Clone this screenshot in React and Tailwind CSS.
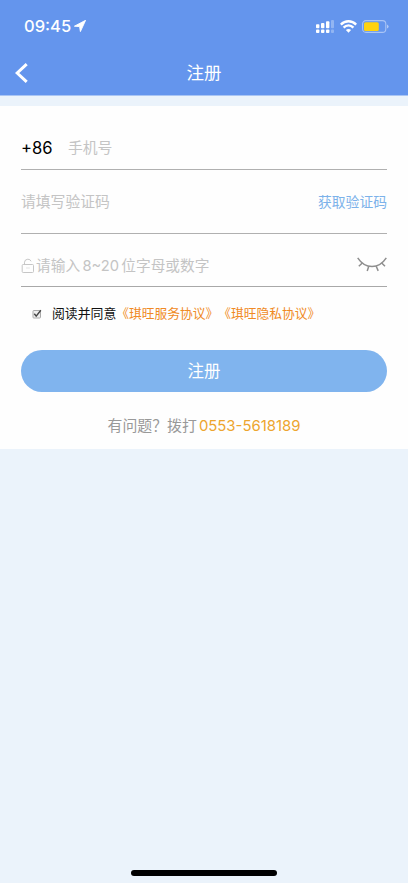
import React, { useState } from 'react';

function StatusBar() {
    return (
        <div className="h-[50px] flex items-start justify-between pl-6 pr-[19px] pt-[17px]">
            <div className="flex items-center h-[19px]">
                <span className="w-[47px] whitespace-nowrap text-[16.5px] leading-[19px] font-medium">09:45</span>
                <svg className="ml-[3px] mb-px" width="12" height="12" viewBox="0 0 12 12" fill="white">
                    <path d="M11.6 0.3 L0.4 6.2 L5.6 6.6 L6.4 11.6 Z" stroke="white" strokeWidth="0.9" strokeLinejoin="round" />
                </svg>
            </div>
            <div className="flex items-center h-[19px]">
                <svg width="18" height="13" viewBox="0 0 18 13" fill="white">
                    <rect x="0" y="4.2" width="3.4" height="4" rx="0.9" />
                    <rect x="5" y="3" width="3.4" height="5.2" rx="0.9" />
                    <rect x="10" y="1.3" width="3.4" height="6.9" rx="0.9" />
                    <rect x="15" y="0" width="3" height="8.2" rx="0.9" opacity="0.3" />
                    <rect x="0" y="9.6" width="3.4" height="3.3" rx="0.9" />
                    <rect x="5" y="9.6" width="3.4" height="3.3" rx="0.9" />
                    <rect x="10" y="9.6" width="3.4" height="3.3" rx="0.9" />
                    <rect x="15" y="9.6" width="3" height="3.3" rx="0.9" opacity="0.3" />
                </svg>
                <svg className="ml-1.5 mb-px" width="17" height="13" viewBox="0 0 17 13" fill="none" stroke="white" strokeWidth="2.4">
                    <path d="M0.8 4.6 Q4.1 1.3 8.5 1.3 T16.2 4.6" />
                    <path d="M3.6 7.6 Q5.7 5.4 8.5 5.4 T13.4 7.6" />
                    <path d="M8.5 12.8 L5.9 10.1 Q8.5 7.9 11.1 10.1 Z" fill="white" stroke="none" />
                </svg>
                <svg className="ml-[5px]" width="27" height="13" viewBox="0 0 27 13">
                    <rect x="0.6" y="0.6" width="23.2" height="11.8" rx="3.4" fill="none" stroke="white" strokeOpacity="0.45" strokeWidth="1.1" />
                    <rect x="2" y="2.2" width="14.8" height="8.8" rx="1.6" fill="#ffd20f" />
                    <path d="M25 4.4 Q26.6 5.2 26.6 6.5 T25 8.6 Z" fill="white" fillOpacity="0.5" />
                </svg>
            </div>
        </div>
    );
}

function LockIcon() {
    return (
        <svg width="14" height="16" viewBox="0 0 14 16" fill="none" stroke="#c6c6c6" strokeWidth="1">
            <rect x="1.2" y="6.5" width="11.3" height="8" rx="1" />
            <path d="M3.5 6.5 V4.2 Q3.7 1.4 6.8 1.2 Q9.3 1.2 10.1 3.3" />
            <path d="M5 10 H8.8" stroke="#e4e4e4" />
        </svg>
    );
}

function ClosedEyeIcon() {
    return (
        <svg width="30" height="15" viewBox="0 0 30 15" fill="none" stroke="#8e8e8e" strokeWidth="1.5">
            <path d="M0.7 0.8 Q6.3 9.4 15 9.4 T29.3 0.8" />
            <path d="M5.3 6 L1.8 9.2 M11.8 9.2 L10.2 13.9 M19.2 9.2 L21.2 13.9 M24.7 6 L28 9.2" />
        </svg>
    );
}

function App() {
    const [phone, setPhone] = useState('');
    const [code, setCode] = useState('');
    const [password, setPassword] = useState('');
    const [agreed, setAgreed] = useState(true);

    return (
        <div className="min-h-screen flex flex-col bg-[#ebf3fb] font-['Inter','Noto_Sans_CJK_SC',sans-serif]">
            {/* Header */}
            <header className="h-24 bg-[#6495ed] border-b border-[#a9c5f4] text-white">
                <StatusBar />
                <div className="h-[45px] grid grid-cols-[1fr_auto_1fr] items-center px-[15px]">
                    <svg width="13" height="20" viewBox="0 0 13 20" fill="none" stroke="white" strokeWidth="3">
                        <path d="M11.7 1.2 L2.2 10 L11.7 18.8" />
                    </svg>
                    <h1 className="text-[17.5px] leading-6 font-normal">注册</h1>
                </div>
            </header>

            {/* Form */}
            <main className="mt-2.5 h-[343px] px-[21px] bg-[#fefefe]">
                <div className="h-16 pt-[21px] flex items-center border-b border-[#b0b0b0]">
                    <span className="w-[47px] text-[16.6px] leading-6 text-black">+86</span>
                    <input
                        className="flex-1 min-w-0 h-6 text-[14.8px] outline-none placeholder:text-[#c4c4c4]"
                        placeholder="手机号"
                        value={phone}
                        onChange={(e) => setPhone(e.target.value)}
                    />
                </div>
                <div className="h-16 flex items-center border-b border-[#b0b0b0]">
                    <input
                        className="flex-1 min-w-0 h-6 text-[14.8px] outline-none placeholder:text-[#c4c4c4]"
                        placeholder="请填写验证码"
                        value={code}
                        onChange={(e) => setCode(e.target.value)}
                    />
                    <button className="text-[13.8px] leading-6 pt-px text-[#7cb2ea]">获取验证码</button>
                </div>
                <div className="h-[53px] pt-[11px] flex items-center border-b border-[#a8a8a8]">
                    <LockIcon />
                    <input
                        type="text"
                        className="flex-1 min-w-0 h-6 ml-px text-[14.7px] [word-spacing:-1.8px] outline-none placeholder:text-[#c4c4c4]"
                        placeholder="请输入 8~20 位字母或数字"
                        value={password}
                        onChange={(e) => setPassword(e.target.value)}
                    />
                    <div className="pb-0.5">
                        <ClosedEyeIcon />
                    </div>
                </div>

                <div className="h-[63px] pb-[9px] flex items-center pl-[11px] text-[12.85px]">
                    <button onClick={() => setAgreed(!agreed)} className="mr-2.5">
                        <svg width="10" height="10" viewBox="0 0 10 10" fill="none">
                            <rect x="1" y="1.5" width="7.5" height="7.5" rx="0.8" fill="#eee" stroke="#aaa" />
                            {agreed && <path d="M2.3 4.8 L4.2 7.2 L8.8 1.2" stroke="#444" strokeWidth="1.4" />}
                        </svg>
                    </button>
                    <span className="text-[#111]">阅读并同意</span>
                    <span className="text-[12.75px] text-[#f08a24] whitespace-nowrap [text-spacing-trim:space-all]">《琪旺服务协议》《琪旺隐私协议》</span>
                </div>

                <button className="w-full h-[42px] rounded-full bg-[#80b4ee] text-white text-[16.5px]">
                    注册
                </button>

                <p className="mt-[22px] flex justify-center text-[14.9px] leading-6 text-[#999] whitespace-pre">
                    有问题？拨打<span className="ml-0.5 text-[#eda52f]">0553-5618189</span>
                </p>
            </main>

            {/* Home indicator */}
            <div className="mt-auto mb-[7px] mx-auto w-[146px] h-[6px] rounded-full bg-black" />
        </div>
    );
}

export default App;
